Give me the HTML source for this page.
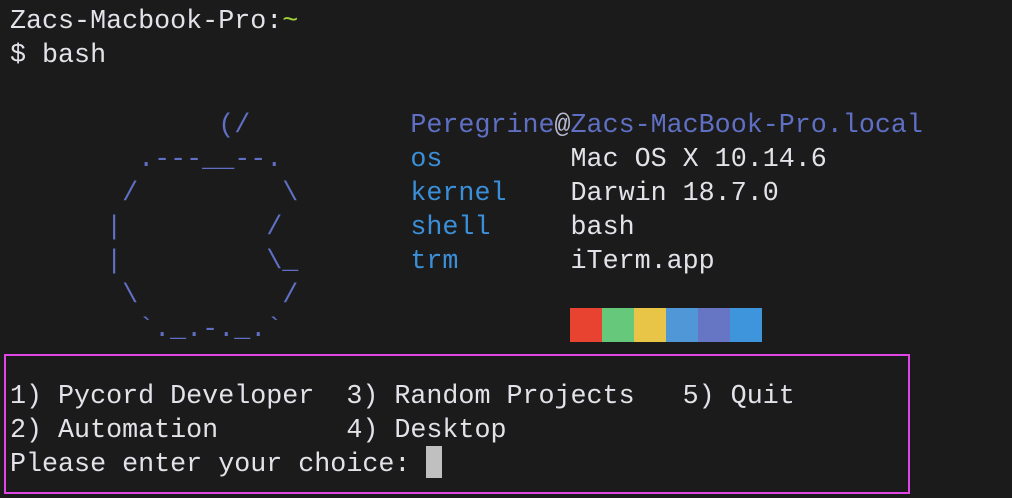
<!DOCTYPE html>
<html><head><meta charset="utf-8"><style>
html,body{margin:0;padding:0;background:#1b1b1b;width:1012px;height:498px;overflow:hidden}
pre{position:absolute;left:10px;margin:0;font-family:"Liberation Mono",monospace;font-size:26.7px;line-height:34px;color:#e2e2e8;white-space:pre}
.p{color:#5f6fc4}.b{color:#3b8fd8}.g{color:#a3d13a}
.box{position:absolute;left:4px;top:354px;width:902px;height:136px;border:2px solid #e046e6}
.cur{position:absolute;left:426px;top:446px;width:16px;height:32px;background:#c0c0c0}
.sw{position:absolute;top:308px;height:34px;width:32px}
</style></head><body>
<div class="box"></div>
<pre style="top:5px">Zacs-Macbook-Pro:<span class="g">~</span>
$ bash</pre>
<pre style="top:109px"><span class="p">             (/</span>          <span class="p">Peregrine</span><span style="color:#b8b8d0">@</span><span class="p">Zacs-MacBook-Pro.local</span>
<span class="p">        .---__--.</span>        <span class="b">os</span>        Mac OS X 10.14.6
<span class="p">       /         \</span>       <span class="b">kernel</span>    Darwin 18.7.0
<span class="p">      |         /</span>        <span class="b">shell</span>     bash
<span class="p">      |         \_</span>       <span class="b">trm</span>       iTerm.app
<span class="p">       \         /</span>
<span class="p">        `._.-._.`</span></pre>
<pre style="top:380px">1) Pycord Developer  3) Random Projects   5) Quit
2) Automation        4) Desktop
Please enter your choice: </pre>
<div class="sw" style="left:570px;background:#e84331"></div>
<div class="sw" style="left:602px;background:#66c87a"></div>
<div class="sw" style="left:634px;background:#e8c546"></div>
<div class="sw" style="left:666px;background:#4f97d6"></div>
<div class="sw" style="left:698px;background:#6676c4"></div>
<div class="sw" style="left:730px;background:#3f95db"></div>
<div class="cur"></div>
</body></html>
